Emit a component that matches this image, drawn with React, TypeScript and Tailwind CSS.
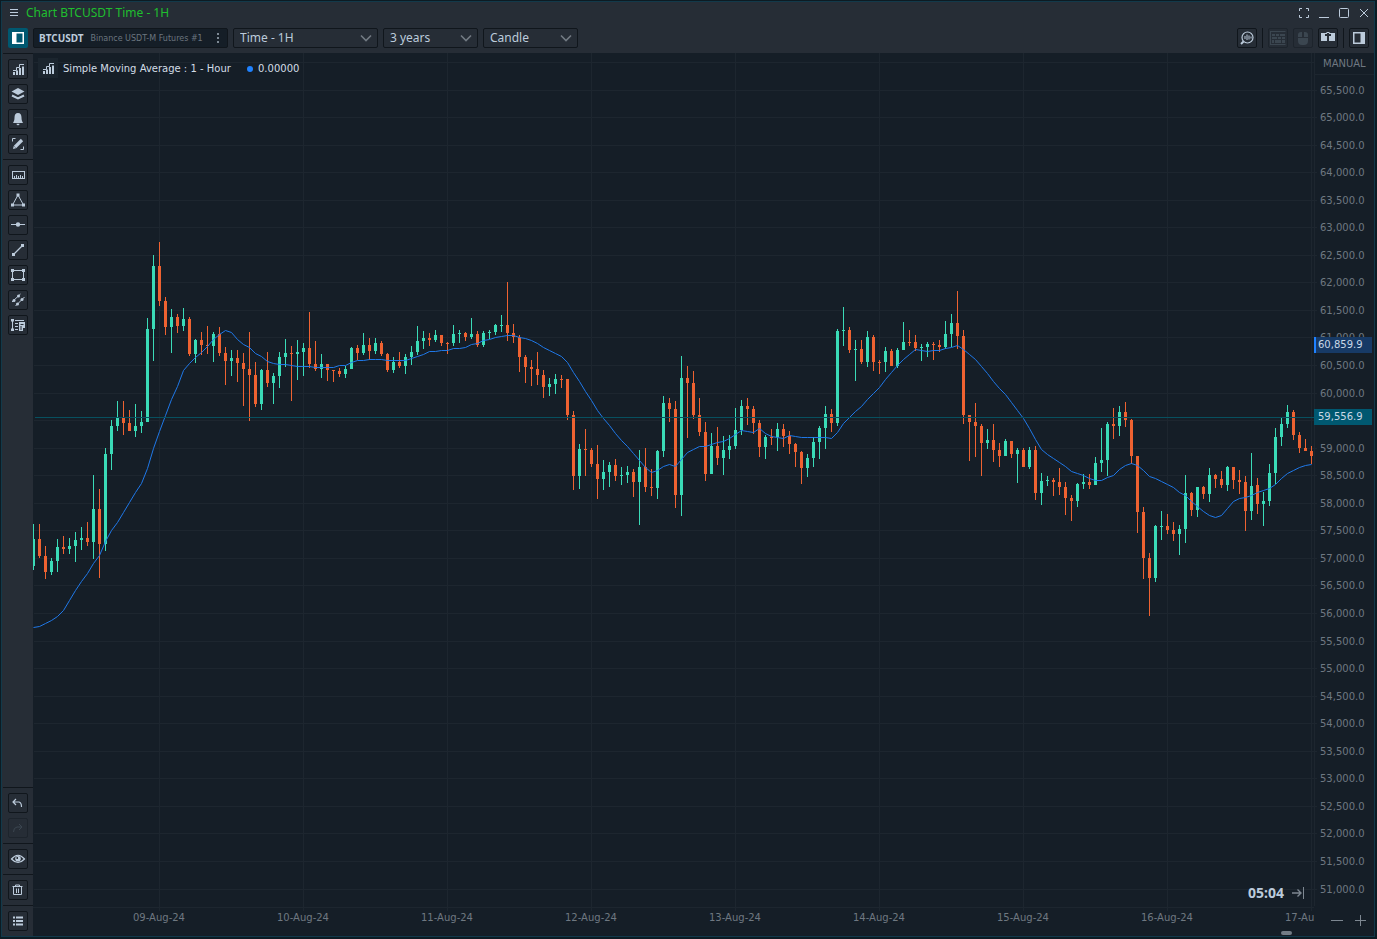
import React, { useState } from 'react';

// plot origin inside the window, candle rows are stored in window pixels
const LEFT = 33;
const TOP = 53;
const STEP = 6;

// [up, high, body top, body bottom, low]
const candles: number[][] = [
  [1, 524, 539, 566, 570], [0, 524, 539, 556, 558], [0, 546, 556, 572, 579], [1, 558, 561, 572, 575],
  [1, 539, 547, 561, 572], [0, 536, 547, 549, 554], [1, 538, 546, 549, 554], [1, 532, 540, 546, 562],
  [1, 527, 538, 540, 550], [0, 522, 538, 542, 546], [1, 475, 509, 542, 559], [0, 489, 509, 544, 578],
  [1, 448, 454, 544, 551], [1, 420, 426, 454, 470], [1, 401, 418, 426, 431], [0, 401, 418, 423, 435],
  [0, 410, 423, 431, 431], [1, 404, 426, 431, 437], [1, 411, 422, 426, 433], [1, 318, 329, 422, 422],
  [1, 255, 266, 329, 361], [0, 242, 266, 301, 306], [0, 297, 301, 327, 335], [1, 309, 317, 327, 353],
  [0, 314, 317, 326, 333], [1, 308, 319, 326, 331], [0, 317, 319, 354, 356], [1, 339, 340, 354, 363],
  [0, 332, 340, 345, 355], [0, 326, 345, 346, 354], [1, 332, 334, 346, 362], [0, 327, 334, 353, 356],
  [0, 347, 353, 361, 385], [1, 350, 358, 361, 376], [0, 350, 358, 363, 382], [0, 353, 363, 369, 406],
  [0, 332, 369, 375, 421], [0, 362, 375, 404, 407], [1, 369, 370, 404, 410], [0, 352, 370, 383, 387],
  [1, 373, 376, 383, 404], [1, 352, 357, 376, 388], [1, 339, 353, 357, 367], [0, 346, 353, 354, 401],
  [1, 340, 352, 354, 380], [1, 343, 348, 352, 376], [0, 312, 348, 364, 368], [0, 341, 364, 369, 371],
  [1, 354, 364, 369, 378], [0, 364, 364, 370, 381], [0, 370, 370, 371, 382], [0, 368, 371, 374, 377],
  [1, 366, 369, 374, 378], [1, 347, 348, 369, 369], [0, 345, 348, 353, 360], [1, 333, 345, 353, 355],
  [0, 338, 345, 351, 360], [1, 338, 343, 351, 354], [0, 341, 343, 354, 356], [0, 353, 354, 370, 372],
  [1, 357, 362, 370, 373], [0, 352, 362, 366, 368], [1, 354, 357, 366, 374], [1, 346, 352, 357, 365],
  [1, 326, 341, 352, 355], [1, 331, 338, 341, 349], [0, 333, 338, 340, 346], [1, 330, 335, 340, 342],
  [0, 335, 335, 343, 346], [0, 342, 343, 344, 354], [1, 325, 334, 343, 346], [1, 330, 333, 334, 343],
  [0, 332, 333, 337, 341], [1, 318, 334, 337, 339], [0, 331, 334, 345, 347], [1, 331, 333, 345, 347],
  [1, 330, 332, 333, 339], [1, 324, 325, 332, 335], [1, 315, 325, 326, 332], [0, 282, 325, 333, 341],
  [0, 324, 333, 337, 343], [0, 335, 337, 357, 372], [0, 355, 357, 367, 383], [0, 360, 367, 369, 386],
  [0, 352, 369, 375, 385], [0, 370, 375, 387, 398], [1, 378, 384, 387, 396], [1, 374, 379, 384, 394],
  [0, 375, 379, 380, 388], [0, 379, 379, 415, 420], [0, 411, 415, 476, 490], [1, 444, 449, 476, 489],
  [0, 429, 449, 450, 476], [0, 448, 450, 464, 467], [0, 445, 464, 479, 499], [1, 460, 472, 479, 490],
  [1, 462, 465, 472, 487], [0, 459, 465, 476, 481], [1, 467, 475, 476, 485], [1, 466, 472, 475, 483],
  [0, 469, 472, 482, 497], [1, 450, 467, 482, 525], [0, 448, 467, 487, 492], [0, 469, 487, 488, 496],
  [1, 450, 451, 488, 499], [1, 396, 403, 451, 457], [0, 398, 403, 409, 422], [0, 401, 409, 495, 508],
  [1, 356, 378, 495, 516], [0, 366, 378, 383, 438], [0, 371, 383, 415, 419], [0, 398, 415, 432, 436],
  [0, 422, 432, 474, 481], [1, 433, 446, 474, 474], [0, 427, 446, 458, 465], [1, 436, 450, 458, 475],
  [1, 435, 446, 450, 459], [1, 408, 430, 446, 449], [1, 400, 406, 430, 435], [0, 398, 406, 409, 425],
  [0, 406, 409, 423, 434], [0, 420, 423, 447, 457], [1, 435, 437, 447, 459], [0, 429, 437, 438, 445],
  [1, 423, 429, 437, 451], [0, 424, 429, 436, 447], [0, 431, 436, 444, 454], [0, 443, 444, 452, 467],
  [0, 451, 452, 468, 484], [1, 454, 458, 468, 477], [1, 437, 442, 458, 467], [1, 426, 428, 442, 459],
  [1, 406, 414, 428, 449], [0, 409, 414, 423, 432], [1, 329, 331, 423, 426], [1, 307, 330, 331, 346],
  [0, 327, 330, 350, 353], [1, 340, 349, 350, 381], [0, 340, 349, 362, 364], [1, 331, 337, 362, 367],
  [0, 335, 337, 362, 371], [0, 360, 362, 363, 374], [1, 347, 351, 362, 372], [0, 349, 351, 366, 366],
  [1, 348, 350, 366, 368], [1, 322, 342, 350, 350], [0, 330, 342, 343, 346], [0, 335, 342, 348, 351],
  [1, 344, 347, 348, 361], [1, 342, 344, 347, 357], [0, 342, 344, 345, 360], [0, 340, 345, 347, 352],
  [1, 321, 334, 347, 349], [1, 314, 323, 334, 347], [0, 291, 323, 336, 349], [0, 330, 336, 415, 424],
  [0, 415, 415, 422, 461], [0, 403, 422, 426, 457], [0, 424, 426, 443, 476], [1, 429, 440, 443, 449],
  [0, 424, 440, 450, 462], [0, 443, 450, 456, 467], [1, 439, 441, 456, 456], [0, 441, 441, 454, 458],
  [1, 448, 450, 454, 483], [0, 448, 450, 467, 467], [1, 447, 450, 467, 469], [0, 446, 450, 493, 500],
  [1, 473, 481, 493, 505], [1, 476, 480, 481, 486], [0, 478, 480, 482, 496], [0, 468, 482, 487, 495],
  [0, 482, 487, 498, 515], [0, 495, 498, 501, 521], [1, 483, 484, 501, 507], [1, 474, 482, 484, 489],
  [0, 474, 482, 485, 489], [1, 457, 463, 485, 485], [1, 428, 460, 463, 472], [1, 422, 424, 460, 476],
  [0, 408, 424, 426, 439], [1, 406, 412, 426, 436], [0, 402, 412, 420, 427], [0, 419, 420, 456, 464],
  [0, 456, 456, 512, 533], [0, 507, 512, 558, 579], [0, 553, 558, 578, 616], [1, 525, 526, 578, 582],
  [1, 511, 526, 527, 540], [0, 514, 526, 530, 534], [0, 522, 530, 534, 541], [1, 525, 529, 534, 555],
  [1, 475, 493, 529, 543], [0, 492, 493, 510, 516], [1, 487, 487, 510, 517], [0, 486, 487, 494, 499],
  [1, 468, 475, 494, 502], [0, 474, 475, 479, 488], [0, 471, 479, 485, 488], [1, 466, 467, 485, 491],
  [0, 467, 467, 480, 489], [0, 470, 480, 482, 494], [0, 476, 482, 511, 531], [1, 453, 486, 511, 520],
  [0, 478, 485, 504, 514], [1, 492, 501, 504, 526], [1, 464, 473, 501, 506], [1, 428, 437, 473, 484],
  [1, 418, 424, 437, 446], [1, 405, 412, 424, 428], [0, 410, 412, 435, 440], [0, 432, 435, 448, 453],
  [0, 439, 448, 451, 451], [0, 446, 451, 456, 464],
];

const sma: number[] = [
  627, 626, 623, 620, 616, 610, 600, 590, 581, 573, 563, 555, 541, 530, 522, 512, 502, 492, 483, 468,
  448, 431, 415, 399, 386, 370, 363, 357, 352, 346, 339, 334, 330, 332, 339, 344, 347, 353, 356, 361,
  363, 364, 364, 365, 366, 366, 366, 367, 367, 367, 367, 365, 365, 362, 360, 360, 359, 359, 359, 360,
  360, 360, 360, 358, 356, 354, 351, 351, 350, 350, 348, 348, 347, 344, 343, 340, 339, 337, 336, 335,
  335, 337, 338, 340, 343, 347, 350, 353, 356, 362, 372, 381, 391, 400, 410, 418, 425, 433, 440, 446,
  453, 460, 467, 472, 470, 466, 464, 466, 459, 452, 449, 446, 446, 444, 442, 441, 438, 434, 430, 431,
  432, 428, 433, 436, 437, 438, 435, 436, 437, 437, 437, 437, 437, 438, 432, 423, 417, 411, 406, 399,
  393, 387, 379, 372, 365, 359, 354, 349, 350, 351, 350, 350, 348, 347, 345, 349, 354, 359, 366, 373,
  381, 388, 394, 402, 410, 418, 428, 439, 449, 454, 458, 462, 466, 471, 473, 475, 478, 480, 480, 477,
  475, 469, 465, 463, 465, 470, 476, 478, 481, 484, 487, 492, 495, 501, 506, 511, 515, 517, 515, 508,
  501, 498, 497, 495, 492, 490, 488, 484, 478, 473, 470, 467, 465, 464,
];

const days = ['09-Aug-24', '10-Aug-24', '11-Aug-24', '12-Aug-24', '13-Aug-24', '14-Aug-24', '15-Aug-24', '16-Aug-24', '17-Aug-24'];
const prices = Array.from({ length: 30 }, (_, i) => 65500 - i * 500);
// the last price tag sits on top of this one
const hiddenPrice = 59500;

const priceY = (price: number) => Math.floor(90 + ((65500 - price) * 799) / 14500) - TOP;
const dayX = (i: number) => 126 + i * 144;

const Icon = ({ children }: { children: React.ReactNode }) => (
  <svg width="20" height="20" viewBox="0 0 20 20" fill="none" stroke="currentColor" className="shrink-0">
    {children}
  </svg>
);

const StatsIcon = () => (
  <Icon>
    <path d="M5 11.500h3.500V8.500h3V5.500H16" />
    <path d="M6 16v-3M9 16v-4.500M12 16V9M15 16V7.500" strokeWidth="2" />
  </Icon>
);

const IconButton = ({ label, children, disabled, active }: { label: string; children: React.ReactNode; disabled?: boolean; active?: boolean }) => (
  <button
    aria-label={label}
    disabled={disabled}
    className={
      active
        ? 'flex h-5 w-5 shrink-0 items-center justify-center overflow-hidden rounded-xs bg-[#005870] text-white'
        : 'flex h-5 w-5 shrink-0 items-center justify-center overflow-hidden rounded-xs border border-[#10161c] text-[#bccbdb] disabled:border-[#1d242c] disabled:text-[#3b4650]'
    }
  >
    {children}
  </button>
);

const Select = ({ label, options, className }: { label: string; options: string[]; className: string }) => {
  const [value, setValue] = useState(options[0]);

  return (
    <div className={`relative h-5 shrink-0 ${className}`}>
      <select
        aria-label={label}
        value={value}
        onChange={(e) => setValue(e.target.value)}
        className="block h-5 w-full appearance-none rounded-xs border border-[#10161c] bg-[#262d36] pl-1.5 text-xs leading-4 text-[#bccbdb] outline-none"
      >
        {options.map((o) => (
          <option key={o}>{o}</option>
        ))}
      </select>
      <svg className="pointer-events-none absolute top-1.5 right-1.5" width="12" height="8" viewBox="0 0 12 8" fill="none" stroke="#727a83" strokeWidth="1.600">
        <path d="M1 1.500l5 5 5-5" />
      </svg>
    </div>
  );
};

const WindowButton = ({ label, children }: { label: string; children: React.ReactNode }) => (
  <button aria-label={label} className="flex h-5 w-5 items-center justify-center text-[#bccbdb]">
    {children}
  </button>
);

const Header = () => (
  <header className="bg-[#262d36]">
    <div className="flex h-[22px] items-center">
      <button aria-label="Menu" className="ml-1.5 flex h-4 w-3 items-center justify-center text-[#bccbdb]">
        <svg width="10" height="8" viewBox="0 0 10 8" stroke="currentColor">
          <path d="M1 .5h8M1 3.500h8M1 6.500h8" />
        </svg>
      </button>
      <h1 className="ml-1.5 flex-1 text-xs leading-4 text-[#1fbf2f]">Chart BTCUSDT Time - 1H</h1>
      <WindowButton label="Full screen">
        <Icon>
          <path d="M5.500 8V5.500H8M12 5.500h2.500V8M14.500 12v2.500H12M8 14.500H5.500V12" />
        </Icon>
      </WindowButton>
      <WindowButton label="Minimize">
        <Icon>
          <path d="M5 14.500h10" />
        </Icon>
      </WindowButton>
      <WindowButton label="Maximize">
        <Icon>
          <rect x="5.500" y="5.500" width="9" height="9" rx="1" />
        </Icon>
      </WindowButton>
      <WindowButton label="Close">
        <Icon>
          <path d="M6 6l8 8M14 6l-8 8" />
        </Icon>
      </WindowButton>
    </div>

    <div className="flex gap-[5px] pt-1 pr-[5px] pb-[5px] pl-1.5">
      <IconButton label="Toggle left panel" active>
        <Icon>
          <path d="M4 4h12v12H4zM8.500 5.500v9h6v-9z" fill="currentColor" fillRule="evenodd" stroke="none" />
        </Icon>
      </IconButton>
      <div className="flex h-5 w-[195px] shrink-0 items-center rounded-xs border border-[#10161c] bg-[#151e27] pl-[5px]">
        <span className="text-[10px] leading-4 font-bold text-[#bccbdb]">BTCUSDT</span>
        <span className="ml-[7px] flex-1 pt-0.5 font-['DejaVu_Sans'] text-[8px] leading-4 whitespace-nowrap text-[#6b757f]">Binance USDT-M Futures #1</span>
        <button aria-label="Symbol menu" className="flex h-4 w-[18px] items-center justify-center text-[#7d8994]">
          <svg width="2" height="10" viewBox="0 0 2 10" fill="currentColor">
            <path d="M0 0h2v2H0zM0 4h2v2H0zM0 8h2v2H0z" />
          </svg>
        </button>
      </div>
      <Select label="Aggregation" options={['Time - 1H', 'Time - 4H', 'Time - 1D']} className="w-[145px]" />
      <Select label="Range" options={['3 years', '1 year', '1 month']} className="w-[95px]" />
      <Select label="Chart style" options={['Candle', 'Bar', 'Line']} className="w-[95px]" />
      <div className="flex-1" />

      <IconButton label="Analyze">
        <Icon>
          <circle cx="10.500" cy="9.500" r="5.500" strokeWidth="1.200" />
          <path d="M6.500 13.500L4 16" strokeWidth="2" />
          <path d="M8 8v3M10 6.500v5.500M12 7.500v4M14 8.500v2" />
        </Icon>
      </IconButton>
      <div className="h-5 w-px bg-[#10161c]" />
      <IconButton label="Keyboard trading" disabled>
        <Icon>
          <path d="M2.500 3.500h15M2.500 16.500h15M2.500 3v14" />
          <path d="M4 6h3v2H4zM8 6h3v2H8zM12 6h5v2h-5zM4 9h5v2H4zM10 9h3v2h-3zM14 9h3v2h-3zM4 12h2v3H4zM7 12h6v3H7zM14 12h3v3h-3z" fill="currentColor" stroke="none" />
        </Icon>
      </IconButton>
      <IconButton label="Mouse trading" disabled>
        <Icon>
          <path d="M5 9V7a3 3 0 0 1 3-3h1v5zM11 4h1a3 3 0 0 1 3 3v2h-4zM5 10h10v3a4 4 0 0 1-4 4H9a4 4 0 0 1-4-4z" fill="currentColor" stroke="none" />
        </Icon>
      </IconButton>
      <IconButton label="Tab linking">
        <Icon>
          <path d="M3 5h6v1H7v2h2v5H3zM11 5h6v8h-6V8h2V6h-2z" fill="currentColor" stroke="none" />
          <path d="M8.500 4.500h3" />
        </Icon>
      </IconButton>
      <div className="h-5 w-px bg-[#10161c]" />
      <IconButton label="Toggle right panel">
        <Icon>
          <path d="M4 4h12v12H4zM5.500 5.500v9h6v-9z" fill="currentColor" fillRule="evenodd" stroke="none" />
        </Icon>
      </IconButton>
    </div>
  </header>
);

const group = 'flex flex-col gap-[5px] border-t border-[#10161c] p-[5px] pr-0';

const Sidebar = () => (
  <nav className="flex w-[30px] shrink-0 flex-col bg-[#262d36]">
    <div className={group}>
      <IconButton label="Indicators">
        <StatsIcon />
      </IconButton>
      <IconButton label="Overlays">
        <Icon>
          <path d="M10 4l6.500 3.500L10 11 3.500 7.500z" fill="currentColor" stroke="none" />
          <path d="M4 11.500l6 3 6-3" strokeWidth="2" />
        </Icon>
      </IconButton>
      <IconButton label="Alerts">
        <Icon>
          <path d="M10 4c2.500 0 3.500 2 3.500 4.500 0 2.500.500 3.500 1.500 5.500H5c1-2 1.500-3 1.500-5.500C6.500 6 7.500 4 10 4zM8.500 14.700h3a1.500 1.500 0 0 1-3 0z" fill="currentColor" stroke="none" />
        </Icon>
      </IconButton>
      <IconButton label="Drawings">
        <Icon>
          <path d="M7 13l7-7" strokeWidth="3.200" />
          <path d="M5 15l.700-3 2.300 2.300z" fill="currentColor" stroke="none" />
          <path d="M4.500 7.500v-3h3M12.500 15.500h3v-3" />
        </Icon>
      </IconButton>
    </div>

    <div className={group}>
      <IconButton label="Ruler">
        <Icon>
          <rect x="4.500" y="6.500" width="12" height="7" />
          <path d="M6.500 13v-2M8.500 13v-3M10.500 13v-2M12.500 13v-3M14.500 13v-2" />
        </Icon>
      </IconButton>
      <IconButton label="Triangle">
        <Icon>
          <path d="M10 5L4.500 15h11z" />
          <path d="M8.500 3.500h3v3h-3zM3 13.500h3v3H3zM14 13.500h3v3h-3z" fill="currentColor" stroke="none" />
        </Icon>
      </IconButton>
      <IconButton label="Horizontal line">
        <Icon>
          <path d="M3 9.500h14" />
          <circle cx="10" cy="9.500" r="2.200" fill="currentColor" stroke="none" />
        </Icon>
      </IconButton>
      <IconButton label="Trend line">
        <Icon>
          <path d="M5.500 14.500l9-9" strokeWidth="1.300" />
          <path d="M4 13h3v3H4zM13 4h3v3h-3z" fill="currentColor" stroke="none" />
        </Icon>
      </IconButton>
      <IconButton label="Rectangle">
        <Icon>
          <rect x="4.500" y="5.500" width="11" height="9" />
          <path d="M3 4h3v3H3zM14 4h3v3h-3zM3 13h3v3H3zM14 13h3v3h-3z" fill="currentColor" stroke="none" />
        </Icon>
      </IconButton>
      <IconButton label="Channel">
        <Icon>
          <path d="M4 12l8.500-8M7.500 16l9-9" />
          <circle cx="6" cy="10.500" r="1.500" fill="currentColor" stroke="none" />
          <circle cx="10.500" cy="6" r="1.500" fill="currentColor" stroke="none" />
          <circle cx="9.500" cy="14" r="1.500" fill="currentColor" stroke="none" />
          <circle cx="14" cy="9.500" r="1.500" fill="currentColor" stroke="none" />
        </Icon>
      </IconButton>
      <IconButton label="Volume profile">
        <Icon>
          <path d="M4.500 5v10M7 5.500h9M7 8.500h3M7 11.500h3M7 14.500h3" />
          <path d="M3 4h3v2.500H3zM3 13.500h3V16H3z" fill="currentColor" stroke="none" />
          <path d="M11 7h6v6h-2v3h-4zM12.500 9v1h3V9zM12.500 11v4h1v-4z" fill="currentColor" fillRule="evenodd" stroke="none" />
        </Icon>
      </IconButton>
    </div>

    <div className="flex-1" />

    <div className={group}>
      <IconButton label="Undo">
        <Icon>
          <path d="M8 6L5 9l3 3M5.500 9H11q2.500.500 2.500 5" strokeWidth="1.200" />
        </Icon>
      </IconButton>
      <IconButton label="Redo" disabled>
        <Icon>
          <path d="M11 6l3 3-3 3M13.500 9H9q-3.500.500-3.500 5" />
        </Icon>
      </IconButton>
    </div>
    <div className={group}>
      <IconButton label="Visibility">
        <Icon>
          <path d="M3.500 10Q10 2.500 16.500 10 10 17 3.500 10z" strokeWidth="1.200" />
          <circle cx="10" cy="9.700" r="2.800" fill="currentColor" stroke="none" />
          <path d="M8.500 8h1.500v2H8.500z" fill="#262d36" stroke="none" />
        </Icon>
      </IconButton>
    </div>
    <div className={group}>
      <IconButton label="Remove all">
        <Icon>
          <path d="M4.500 6.500h10M7.500 6V5h4v1M5.500 7v7.500h8V7M8.500 8.500v4.500M10.500 8.500v4.500" />
        </Icon>
      </IconButton>
    </div>
    <div className={group}>
      <IconButton label="Object list">
        <Icon>
          <path d="M5 6.500h2M5 10h2M5 13.500h2M8 6.500h7M8 10h7M8 13.500h7" strokeWidth="2" />
        </Icon>
      </IconButton>
    </div>
  </nav>
);

const Plot = () => (
  <svg className="block h-full w-full" shapeRendering="crispEdges">
    <g fill="#1d262f">
      <rect x="1" y="9" width="100%" height="1" />
      {prices.map((p) => (
        <rect key={p} x="1" y={priceY(p)} width="100%" height="1" />
      ))}
      {days.map((d, i) => (
        <rect key={d} x={dayX(i)} y="0" width="1" height="100%" />
      ))}
    </g>
    {candles.map(([up, high, top, bottom, low], i) => (
      <g key={i} fill={up ? '#3adbb7' : '#ee6231'}>
        <rect x={i * STEP} y={high - TOP} width="1" height={low - high} />
        <rect x={i * STEP - 1} y={top - TOP} width="3" height={bottom - top} />
      </g>
    ))}
    <polyline
      points={sma.map((y, i) => `${i * STEP + 0.5},${y - TOP + 0.5}`).join(' ')}
      fill="none"
      stroke="#1f78e8"
      shapeRendering="auto"
    />
    <rect x={35 - LEFT} y={417 - TOP} width="100%" height="1" fill="#07505f" />
  </svg>
);

const PriceAxis = () => (
  <svg className="block w-full flex-1 font-['DejaVu_Sans'] text-[10px]" fill="#6f7881">
    <rect x="0" y="0" width="1" height="100%" fill="#1d262f" />
    {prices.map((p) => (
      <g key={p}>
        <rect x="0" y={priceY(p)} width="3" height="1" fill="#1d262f" />
        {p !== hiddenPrice && (
          <text x="6" y={priceY(p) + 4}>
            {p.toLocaleString('en-US')}.0
          </text>
        )}
      </g>
    ))}
    <rect x="0" y="21" width="60" height="1" fill="#1d262f" />
    <text x="9" y="14">MANUAL</text>
    <rect x="0" y="284" width="58" height="16" fill="#173a66" />
    <rect x="0" y="284" width="2" height="16" fill="#1f82ff" />
    <text x="4" y="295" fill="#c9d8e6">60,859.9</text>
    <rect x="0" y="356" width="58" height="16" fill="#005870" />
    <text x="4" y="367" fill="#c9d8e6">59,556.9</text>
  </svg>
);

export default function App() {
  return (
    <div className="h-screen bg-[#0c1b23] pt-px pr-0.5 pb-0.5 pl-px font-['Noto_Sans',sans-serif]">
      <div className="flex h-full flex-col border border-[#12394a] bg-[#262d36]">
        <Header />
        <div className="flex min-h-0 flex-1 pl-px">
          <Sidebar />
          <main className="flex min-w-0 flex-1 bg-[#151e27]">
            <section className="flex min-w-0 flex-1 flex-col">
              <div className="relative min-h-0 flex-1 overflow-hidden">
                <Plot />
                <div className="absolute top-[5px] left-[5px] flex h-5 items-center font-['DejaVu_Sans'] text-[10px] leading-4 text-[#d3dde6]">
                  <button aria-label="Indicator settings" className="mr-[5px] flex h-5 w-5 items-center justify-center bg-[#1b252e] text-[#bccbdb]">
                    <StatsIcon />
                  </button>
                  <div className="flex items-center pt-0.5">
                    <span className="w-[176px]">Simple Moving Average : 1 - Hour</span>
                    <span className="mr-[5px] ml-2 h-1.5 w-1.5 rounded-full bg-[#1f82ff]" />
                    <span>0.00000</span>
                  </div>
                </div>
                <div className="absolute right-2.5 bottom-1 flex items-center gap-2">
                  <span className="text-sm leading-5 font-bold text-[#bccbdb]">05:04</span>
                  <button aria-label="Go to last bar" className="text-[#7d8791]">
                    <svg className="block" width="12" height="12" viewBox="0 0 12 12" fill="none" stroke="currentColor">
                      <path d="M0 6h9M5.500 2.500L9 6 5.500 9.500" strokeWidth="1.400" />
                      <path d="M11.500 0v12" />
                    </svg>
                  </button>
                </div>
              </div>
              <svg className="block h-6 w-full font-['DejaVu_Sans'] text-[10px]" fill="#6f7881" textAnchor="middle">
                <rect width="100%" height="1" fill="#1d262f" />
                {days.map((d, i) => (
                  <g key={d}>
                    <rect x={dayX(i)} y="0" width="1" height="4" fill="#1d262f" />
                    <text x={dayX(i)} y="14">
                      {d}
                    </text>
                  </g>
                ))}
              </svg>
              <div className="flex h-[5px] justify-end pr-[22px]">
                <div className="h-1 w-[11px] rounded-full bg-[#737c86]" />
              </div>
            </section>
            <aside className="flex w-[60px] shrink-0 flex-col">
              <PriceAxis />
              <div className="flex h-[30px] items-center justify-end pr-px text-[#7d8791]">
                <button aria-label="Zoom out" className="flex h-5 w-6 items-center justify-center">
                  <svg width="12" height="12" viewBox="0 0 12 12" stroke="currentColor">
                    <path d="M0 5.500h12" />
                  </svg>
                </button>
                <button aria-label="Zoom in" className="flex h-5 w-6 items-center justify-center">
                  <svg width="12" height="12" viewBox="0 0 12 12" stroke="currentColor">
                    <path d="M0 5.500h11M5.500 0v11" />
                  </svg>
                </button>
              </div>
            </aside>
          </main>
        </div>
      </div>
    </div>
  );
}
